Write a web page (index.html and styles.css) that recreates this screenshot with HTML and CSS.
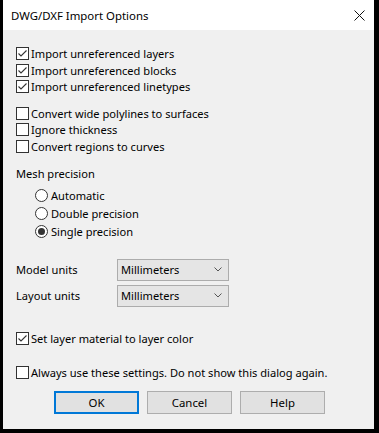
FILE: index.html
```html
<!DOCTYPE html>
<html lang="en">

<head>
    <meta charset="UTF-8">
    <title>DWG/DXF Import Options</title>
    <link rel="stylesheet" href="styles.css">
</head>

<body>
    <div class="dialog">
        <div class="titlebar">
            <span class="title">DWG/DXF Import Options</span>
            <svg class="close" width="11" height="11" viewBox="0 0 11 11">
                <path d="M0.5 0.5 L10.5 10.5 M10.5 0.5 L0.5 10.5" stroke="#111" stroke-width="1" fill="none" />
            </svg>
        </div>

        <div class="content">
            <div class="group">
                <label class="check"><span class="box checked"><svg viewBox="0 0 11 11"><path d="M1.5 5.5 L4 8 L9.5 2.5" /></svg></span>Import unreferenced layers</label>
                <label class="check"><span class="box checked"><svg viewBox="0 0 11 11"><path d="M1.5 5.5 L4 8 L9.5 2.5" /></svg></span>Import unreferenced blocks</label>
                <label class="check"><span class="box checked"><svg viewBox="0 0 11 11"><path d="M1.5 5.5 L4 8 L9.5 2.5" /></svg></span>Import unreferenced linetypes</label>
            </div>

            <div class="group group-gap">
                <label class="check"><span class="box"></span>Convert wide polylines to surfaces</label>
                <label class="check"><span class="box"></span>Ignore thickness</label>
                <label class="check"><span class="box"></span>Convert regions to curves</label>
            </div>

            <div class="section-label">Mesh precision</div>
            <div class="radios">
                <label class="radio"><span class="circle"></span>Automatic</label>
                <label class="radio"><span class="circle"></span>Double precision</label>
                <label class="radio"><span class="circle selected"></span>Single precision</label>
            </div>

            <div class="units">
                <div class="unit-row">
                    <span class="unit-label">Model units</span>
                    <div class="select">Millimeters<svg width="8" height="5" viewBox="0 0 8 5"><path d="M0.5 0.5 L4 4 L7.5 0.5" /></svg></div>
                </div>
                <div class="unit-row">
                    <span class="unit-label">Layout units</span>
                    <div class="select">Millimeters<svg width="8" height="5" viewBox="0 0 8 5"><path d="M0.5 0.5 L4 4 L7.5 0.5" /></svg></div>
                </div>
            </div>

            <label class="check material"><span class="box checked"><svg viewBox="0 0 11 11"><path d="M1.5 5.5 L4 8 L9.5 2.5" /></svg></span>Set layer material to layer color</label>

            <label class="check always"><span class="box"></span>Always use these settings. Do not show this dialog again.</label>

            <div class="buttons">
                <button class="btn btn-default">OK</button>
                <button class="btn">Cancel</button>
                <button class="btn">Help</button>
            </div>
        </div>
    </div>
</body>

</html>
```

FILE: styles.css
```css
* {
    box-sizing: border-box;
}

html,
body {
    margin: 0;
    height: 100%;
}

body {
    background-color: #000;
    font-family: "Noto Sans", "Liberation Sans", sans-serif;
    font-size: 11.1px;
    color: #000;
}

.dialog {
    width: 371px;
    height: 429px;
    margin-left: 3px;
    background-color: #f0f0f0;
}

.titlebar {
    height: 30px;
    background-color: #fff;
    display: flex;
    align-items: center;
    justify-content: space-between;
    padding: 0 9px 0 8px;
}

.title {
    font-size: 11.4px;
}

.close {
    display: block;
}

.content {
    padding: 15.5px 0 0 13px;
}

.group {
    display: flex;
    flex-direction: column;
}

.group-gap {
    margin-top: 10px;
}

.check {
    height: 16.5px;
    display: flex;
    align-items: center;
    gap: 2px;
    white-space: nowrap;
}

.box {
    width: 13px;
    height: 13px;
    border: 1px solid #333;
    background-color: #fff;
    flex-shrink: 0;
}

.box svg {
    display: block;
    width: 11px;
    height: 11px;
    fill: none;
    stroke: #333;
    stroke-width: 1.1;
}

.section-label {
    margin-top: 11.5px;
    height: 16.5px;
    line-height: 16.5px;
}

/* 单选框 */
.radios {
    margin-top: 4px;
    margin-left: 19px;
    display: flex;
    flex-direction: column;
}

.radio {
    height: 18px;
    display: flex;
    align-items: center;
    gap: 3px;
}

.circle {
    width: 13px;
    height: 13px;
    border: 1px solid #333;
    border-radius: 50%;
    background-color: #fff;
    display: flex;
    align-items: center;
    justify-content: center;
}

.circle.selected::after {
    content: "";
    width: 7px;
    height: 7px;
    border-radius: 50%;
    background-color: #333;
}

.units {
    margin-top: 18px;
    display: flex;
    flex-direction: column;
    gap: 4px;
}

.unit-row {
    display: flex;
    align-items: center;
    height: 22px;
}

.unit-label {
    width: 101px;
}

.select {
    width: 112px;
    height: 22px;
    background-color: #e5e5e5;
    border: 1px solid #acacac;
    display: flex;
    align-items: center;
    justify-content: space-between;
    padding: 0 6px 0 3px;
}

.select svg {
    fill: none;
    stroke: #555;
    stroke-width: 1;
}

.material {
    margin-top: 24px;
}

.always {
    margin-top: 17.5px;
}

.buttons {
    margin-top: 9.5px;
    margin-left: 38px;
    display: flex;
    gap: 8px;
}

.btn {
    width: 85px;
    height: 23px;
    background-color: #e1e1e1;
    border: 1px solid #adadad;
    font-family: inherit;
    font-size: 11.4px;
    color: #000;
    padding: 0;
}

.btn-default {
    border: 2px solid #0078d7;
}
```
